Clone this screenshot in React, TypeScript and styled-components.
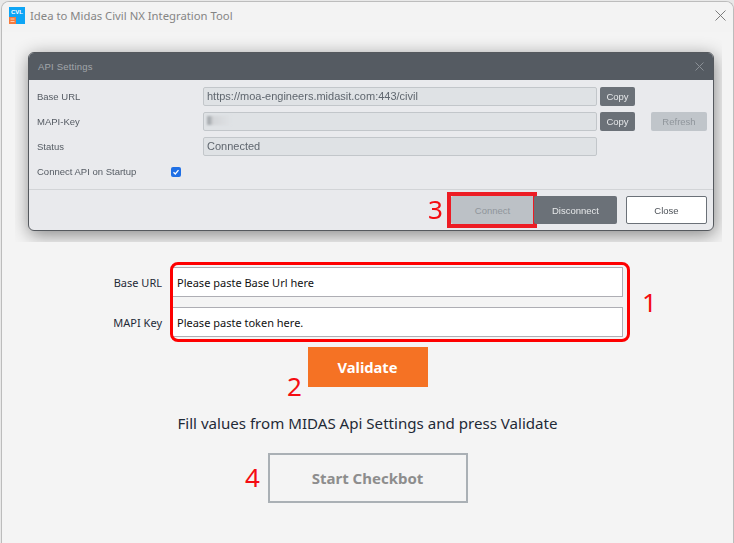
import { createGlobalStyle, styled } from "styled-components";

const GlobalStyle = createGlobalStyle`
  html, body {
    margin: 0;
    padding: 0;
    background: #e8e8e8;
    overflow: hidden;
  }
  * {
    box-sizing: border-box;
  }
`;

const Window = styled.div`
  position: relative;
  width: 733px;
  height: 542px;
  margin: 1px 0 0 1px;
  background: #f4f4f4;
  border: 1px solid #bcbcbc;
  border-bottom: 0;
  border-radius: 8px 8px 0 0;
  overflow: hidden;
  font-family: "Noto Sans", "Open Sans", sans-serif;
`;

const TitleBar = styled.div`
  display: flex;
  align-items: center;
  height: 30px;
  padding: 0 7px 4px 7px;
  background: #f3f3f3;
`;

const Title = styled.span`
  margin-left: 5px;
  font-size: 11.3px;
  color: #858585;
`;

const CloseIcon = styled.svg`
  margin-left: auto;
`;

const ShotPanel = styled.div`
  width: 707px;
  height: 210px;
  margin-left: 13px;
  padding: 20px 8px 0 13px;
  overflow: hidden;
`;

const Dialog = styled.div`
  position: relative;
  width: 686px;
  height: 179px;
  background: #e9eaed;
  border: 1px solid #55595e;
  border-radius: 6px;
  box-shadow: 1px 4px 18px rgba(0, 0, 0, 0.45);
  filter: blur(0.3px);
  font-family: "Liberation Sans", Arial, sans-serif;
  font-size: 9.5px;
  color: #555b63;
`;

const DialogHeader = styled.div`
  display: flex;
  align-items: center;
  justify-content: space-between;
  height: 27px;
  padding: 0 9px;
  background: #555b62;
  border-radius: 5px 5px 0 0;
  color: #a3a7ab;
  font-size: 9.5px;
  letter-spacing: 0.2px;
`;

const DialogBody = styled.div`
  display: grid;
  grid-template-columns: 163px 394px 35px 56px;
  grid-auto-rows: 19px;
  column-gap: 3px;
  row-gap: 6px;
  align-items: center;
  height: 110px;
  padding: 7px 0 0 8px;
  border-bottom: 1px solid #d2d4d7;
`;

const SettingLabel = styled.span`
  grid-column: 1;
`;

const SettingField = styled.div`
  grid-column: 2;
  display: flex;
  align-items: center;
  height: 19px;
  padding: 0 0 2px 3px;
  background: #dfe2e5;
  border: 1px solid #c2c6ca;
  border-radius: 2px;
  font-size: 11px;
  color: #5f666e;
  overflow: hidden;
`;

const BlurredKey = styled.div`
  width: 24px;
  height: 9px;
  background: linear-gradient(90deg, #a9adb1 0 3px, #d3d5d8 6px, #dfe2e5 100%);
  filter: blur(1px);
`;

const SmallButton = styled.div<{ $muted?: boolean }>`
  display: flex;
  align-items: center;
  justify-content: center;
  height: 19px;
  margin-left: ${(p) => (p.$muted ? "13px" : "0")};
  width: ${(p) => (p.$muted ? "56px" : "35px")};
  border-radius: 2px;
  background: ${(p) => (p.$muted ? "#c0c5ca" : "#6b7178")};
  color: ${(p) => (p.$muted ? "#8f959b" : "#e6e8ea")};
`;

const Check = styled.div`
  display: flex;
  align-items: center;
  justify-content: center;
  width: 10px;
  height: 10px;
  border-radius: 2px;
  background: #1f6fe5;
`;

const StartupRow = styled.div`
  grid-column: 1 / -1;
  display: grid;
  grid-template-columns: 134px 20px;
  align-items: center;
`;

const DialogFooter = styled.div`
  display: flex;
  justify-content: flex-end;
  align-items: flex-start;
  padding: 6px 6px 0 0;
`;

const FooterButton = styled.div<{ $kind: "off" | "dark" | "light" }>`
  position: relative;
  display: flex;
  align-items: center;
  justify-content: center;
  width: ${(p) => (p.$kind === "light" ? "81px" : "83px")};
  margin-left: ${(p) => (p.$kind === "light" ? "9px" : "0")};
  height: 28px;
  border-radius: 2px;
  background: ${(p) =>
    p.$kind === "off" ? "#bcc1c6" : p.$kind === "dark" ? "#6b7178" : "#ffffff"};
  border: ${(p) => (p.$kind === "light" ? "1px solid #6b7178" : "0")};
  color: ${(p) =>
    p.$kind === "off" ? "#8f959b" : p.$kind === "dark" ? "#e6e8ea" : "#4d5258"};
`;

const ConnectMarker = styled.div`
  position: absolute;
  left: -4px;
  top: -4px;
  width: 90px;
  height: 36px;
  border: 4px solid #ed1c24;
`;

const AnnotationNumber = styled.span<{ $x: number; $y: number; $size?: number }>`
  position: absolute;
  left: ${(p) => p.$x}px;
  top: ${(p) => p.$y}px;
  font-family: "Noto Sans", sans-serif;
  font-size: ${(p) => p.$size ?? 26}px;
  line-height: 1;
  color: #f40c12;
`;

const Form = styled.div`
  position: relative;
  display: grid;
  grid-template-columns: 154px 451px;
  grid-auto-rows: 30px;
  row-gap: 10px;
  align-items: center;
  width: 605px;
  margin: 25px 0 0 16px;
`;

const FormHighlight = styled.div`
  position: absolute;
  left: 152px;
  top: -5px;
  width: 460px;
  height: 80px;
  border: 3.5px solid #fe0000;
  border-radius: 8px;
`;

const FormLabel = styled.label`
  justify-self: end;
  padding-right: 10px;
  font-size: 11px;
  color: #1f2a37;
`;

const FormInput = styled.div`
  display: flex;
  align-items: center;
  height: 30px;
  padding-left: 4px;
  background: #ffffff;
  border: 1px solid #aeaeb4;
  font-size: 11px;
  color: #111111;
`;

const ValidateRow = styled.div`
  display: flex;
  justify-content: center;
  margin-top: 10px;
`;

const ValidateButton = styled.div`
  display: flex;
  align-items: center;
  justify-content: center;
  width: 120px;
  height: 40px;
  background: #f57224;
  color: #ffffff;
  font-size: 14.7px;
  font-weight: 700;
`;

const Hint = styled.div`
  margin-top: 26px;
  text-align: center;
  font-size: 15.1px;
  line-height: 20px;
  color: #1f2a37;
`;

const StartRow = styled.div`
  display: flex;
  justify-content: center;
  margin-top: 20px;
`;

const StartButton = styled.div`
  display: flex;
  align-items: center;
  justify-content: center;
  width: 200px;
  height: 50px;
  border: 2px solid #aab0b5;
  color: #8d8d8d;
  font-size: 15px;
  font-weight: 700;
`;

function AppLogo() {
  return (
    <svg width="16" height="17" viewBox="0 0 16 17">
      <rect width="16" height="17" fill="#0ea5f5" />
      <text x="8" y="7" textAnchor="middle" fontSize="6" fontWeight="700" fontFamily="Liberation Sans" fill="#ffffff">
        CVL
      </text>
      <rect x="0" y="10" width="7" height="7" fill="#f57a3c" />
      <path d="M1.5 12h4M1.5 14.5h4" stroke="#ffd9c2" strokeWidth="0.9" />
    </svg>
  );
}

export default function App() {
  return (
    <>
      <GlobalStyle />
      <Window>
        <TitleBar>
          <AppLogo />
          <Title>Idea to Midas Civil NX Integration Tool</Title>
          <CloseIcon width="11" height="11" viewBox="0 0 11 11">
            <path d="M0.5 0.5l10 10M10.5 0.5l-10 10" stroke="#6e6e6e" strokeWidth="0.9" fill="none" />
          </CloseIcon>
        </TitleBar>

        <ShotPanel>
          <Dialog>
            <DialogHeader>
              API Settings
              <svg width="9" height="9" viewBox="0 0 9 9">
                <path d="M0.5 0.5l8 8M8.5 0.5l-8 8" stroke="#8b9096" strokeWidth="1" fill="none" />
              </svg>
            </DialogHeader>
            <DialogBody>
              <SettingLabel>Base URL</SettingLabel>
              <SettingField>https://moa-engineers.midasit.com:443/civil</SettingField>
              <SmallButton>Copy</SmallButton>
              <span />
              <SettingLabel>MAPI-Key</SettingLabel>
              <SettingField>
                <BlurredKey />
              </SettingField>
              <SmallButton>Copy</SmallButton>
              <SmallButton $muted>Refresh</SmallButton>
              <SettingLabel>Status</SettingLabel>
              <SettingField>Connected</SettingField>
              <span />
              <span />
              <StartupRow>
                <span>Connect API on Startup</span>
                <Check>
                  <svg width="8" height="8" viewBox="0 0 8 8">
                    <path d="M1.5 4.2l1.8 1.8 3.2-3.8" stroke="#ffffff" strokeWidth="1.3" fill="none" />
                  </svg>
                </Check>
              </StartupRow>
            </DialogBody>
            <DialogFooter>
              <FooterButton $kind="off">
                Connect
                <ConnectMarker />
              </FooterButton>
              <FooterButton $kind="dark">Disconnect</FooterButton>
              <FooterButton $kind="light">Close</FooterButton>
            </DialogFooter>
          </Dialog>
        </ShotPanel>

        <Form>
          <FormHighlight />
          <FormLabel>Base URL</FormLabel>
          <FormInput>Please paste Base Url here</FormInput>
          <FormLabel>MAPI Key</FormLabel>
          <FormInput>Please paste token here.</FormInput>
        </Form>
        <ValidateRow>
          <ValidateButton>Validate</ValidateButton>
        </ValidateRow>
        <Hint>Fill values from MIDAS Api Settings and press Validate</Hint>
        <StartRow>
          <StartButton>Start Checkbot</StartButton>
        </StartRow>

        <AnnotationNumber $x={426} $y={194}>3</AnnotationNumber>
        <AnnotationNumber $x={640} $y={287}>1</AnnotationNumber>
        <AnnotationNumber $x={285} $y={371}>2</AnnotationNumber>
        <AnnotationNumber $x={243} $y={462}>4</AnnotationNumber>
      </Window>
    </>
  );
}
